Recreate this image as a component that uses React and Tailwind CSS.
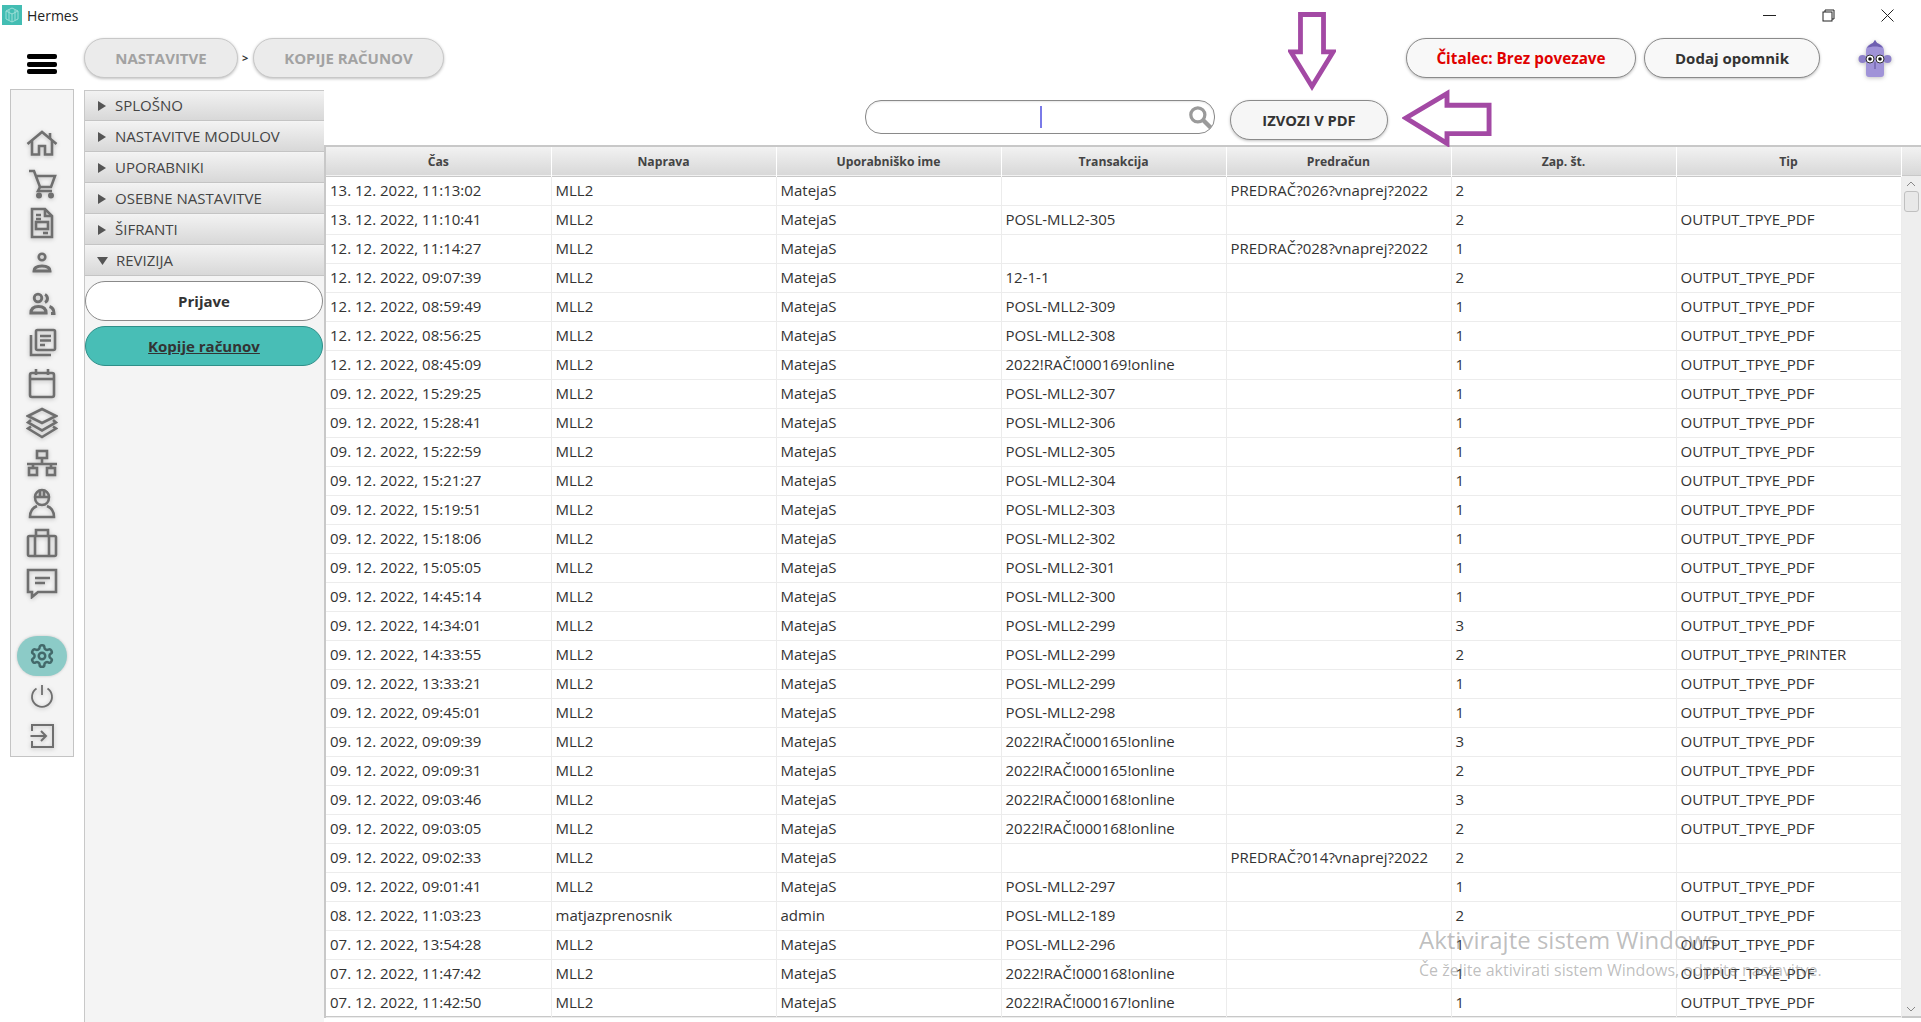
import React from "react";

const FONT = "font-['Open_Sans','Noto_Sans',sans-serif]";

const PDF = "OUTPUT_TPYE_PDF";
const rows = [
  ["13. 12. 2022, 11:13:02", "MLL2", "MatejaS", "", "PREDRAČ?026?vnaprej?2022", "2", ""],
  ["13. 12. 2022, 11:10:41", "MLL2", "MatejaS", "POSL-MLL2-305", "", "2", PDF],
  ["12. 12. 2022, 11:14:27", "MLL2", "MatejaS", "", "PREDRAČ?028?vnaprej?2022", "1", ""],
  ["12. 12. 2022, 09:07:39", "MLL2", "MatejaS", "12-1-1", "", "2", PDF],
  ["12. 12. 2022, 08:59:49", "MLL2", "MatejaS", "POSL-MLL2-309", "", "1", PDF],
  ["12. 12. 2022, 08:56:25", "MLL2", "MatejaS", "POSL-MLL2-308", "", "1", PDF],
  ["12. 12. 2022, 08:45:09", "MLL2", "MatejaS", "2022!RAČ!000169!online", "", "1", PDF],
  ["09. 12. 2022, 15:29:25", "MLL2", "MatejaS", "POSL-MLL2-307", "", "1", PDF],
  ["09. 12. 2022, 15:28:41", "MLL2", "MatejaS", "POSL-MLL2-306", "", "1", PDF],
  ["09. 12. 2022, 15:22:59", "MLL2", "MatejaS", "POSL-MLL2-305", "", "1", PDF],
  ["09. 12. 2022, 15:21:27", "MLL2", "MatejaS", "POSL-MLL2-304", "", "1", PDF],
  ["09. 12. 2022, 15:19:51", "MLL2", "MatejaS", "POSL-MLL2-303", "", "1", PDF],
  ["09. 12. 2022, 15:18:06", "MLL2", "MatejaS", "POSL-MLL2-302", "", "1", PDF],
  ["09. 12. 2022, 15:05:05", "MLL2", "MatejaS", "POSL-MLL2-301", "", "1", PDF],
  ["09. 12. 2022, 14:45:14", "MLL2", "MatejaS", "POSL-MLL2-300", "", "1", PDF],
  ["09. 12. 2022, 14:34:01", "MLL2", "MatejaS", "POSL-MLL2-299", "", "3", PDF],
  ["09. 12. 2022, 14:33:55", "MLL2", "MatejaS", "POSL-MLL2-299", "", "2", "OUTPUT_TPYE_PRINTER"],
  ["09. 12. 2022, 13:33:21", "MLL2", "MatejaS", "POSL-MLL2-299", "", "1", PDF],
  ["09. 12. 2022, 09:45:01", "MLL2", "MatejaS", "POSL-MLL2-298", "", "1", PDF],
  ["09. 12. 2022, 09:09:39", "MLL2", "MatejaS", "2022!RAČ!000165!online", "", "3", PDF],
  ["09. 12. 2022, 09:09:31", "MLL2", "MatejaS", "2022!RAČ!000165!online", "", "2", PDF],
  ["09. 12. 2022, 09:03:46", "MLL2", "MatejaS", "2022!RAČ!000168!online", "", "3", PDF],
  ["09. 12. 2022, 09:03:05", "MLL2", "MatejaS", "2022!RAČ!000168!online", "", "2", PDF],
  ["09. 12. 2022, 09:02:33", "MLL2", "MatejaS", "", "PREDRAČ?014?vnaprej?2022", "2", ""],
  ["09. 12. 2022, 09:01:41", "MLL2", "MatejaS", "POSL-MLL2-297", "", "1", PDF],
  ["08. 12. 2022, 11:03:23", "matjazprenosnik", "admin", "POSL-MLL2-189", "", "2", PDF],
  ["07. 12. 2022, 13:54:28", "MLL2", "MatejaS", "POSL-MLL2-296", "", "1", PDF],
  ["07. 12. 2022, 11:47:42", "MLL2", "MatejaS", "2022!RAČ!000168!online", "", "1", PDF],
  ["07. 12. 2022, 11:42:50", "MLL2", "MatejaS", "2022!RAČ!000167!online", "", "1", PDF],
];

const columns = ["Čas", "Naprava", "Uporabniško ime", "Transakcija", "Predračun", "Zap. št.", "Tip"];
const sections = ["SPLOŠNO", "NASTAVITVE MODULOV", "UPORABNIKI", "OSEBNE NASTAVITVE", "ŠIFRANTI", "REVIZIJA"];

const Icon = ({ children }) => (
  <svg
    viewBox="0 0 32 32"
    className="h-8 w-8 fill-none stroke-[#6f6f6f] drop-shadow-[0_1px_2px_rgba(0,0,0,0.22)]"
    strokeWidth="2.6"
  >
    {children}
  </svg>
);

const railTop = [
  <><path d="M1.500 17 16 5l14.500 12" /><path d="M6 14v13.500h7V19h6v8.500h7V14" /><path d="M24 6v6" /></>,
  <><path d="M3 4h5l6 16h11l4-11H10" /><path d="m14 20-2 4h14" /><circle cx="13" cy="28.500" r="1.700" fill="#6f6f6f" /><circle cx="25" cy="28.500" r="1.700" fill="#6f6f6f" /></>,
  <><path d="M6 2h13l7 7v21H6z" /><path d="M19 2v7h7" /><path d="M10 8h5M10 12h5" /><rect x="10" y="15" width="12" height="7" /><path d="M17 26h5" /></>,
  <><circle cx="16" cy="10" r="3.300" /><path d="M8 24c0-3.500 3.500-5 8-5s8 1.500 8 5z" strokeWidth="3" /></>,
  <><circle cx="12" cy="11" r="3.800" strokeWidth="2.800" /><path d="M5 26c0-4.500 3-6.500 7.500-6.500s7.500 2 7.500 6.500z" strokeWidth="3.200" /><path d="M19 7.500a4.500 4.500 0 0 1 0 8M23.500 19.500c3 1 4.500 3.500 4.500 7h-3" strokeWidth="3" /></>,
  <><rect x="10" y="3" width="19" height="20" rx="1.500" /><path d="M14 9h11M14 13.500h11M14 18h5" /><path d="M5 8v20h20" /></>,
  <><rect x="4" y="6" width="24" height="24" rx="2" /><path d="M4 12h24" /><path d="M10 2v6M22 2v6" /></>,
  <><path d="m16 2 14 7-14 7L2 9z" /><path d="m5 13-3 2.500 14 8 14-8-3-2.500" /><path d="m5 19.500-3 2 14 8.500 14-8.500-3-2" /></>,
  <><rect x="11" y="4" width="10" height="7" /><path d="M16 11v6M1 17h30M7 17v4M25 17v4" /><rect x="3" y="21" width="8" height="7" /><rect x="21" y="21" width="8" height="7" /></>,
  <><path d="M9 10a7 7 0 0 1 14 0c0 5-3 8-7 8s-7-3-7-8z" /><path d="M8 10h16M14 3v7M18 3v7" /><path d="M11 19c-5 2-7 5-7 11h24c0-6-2-9-7-11" /></>,
  <><rect x="2" y="9" width="28" height="20" rx="1.500" /><path d="M10 9V3h12v6M9 9v20M23 9v20" /></>,
  <><path d="M2 3h28v22H12l-6 5v-5H2z" /><path d="M9 11h15M9 16h10" /></>,
];

const Pill = ({ className, children }) => (
  <div className={`flex h-10 items-center justify-center rounded-[20px] border shadow-[0_1px_3px_rgba(0,0,0,0.25)] ${className}`}>
    {children}
  </div>
);

export default function App() {
  return (
    <div className={`relative h-[1022px] w-[1921px] overflow-hidden bg-white text-[#333333] ${FONT}`}>
      {/* title bar */}
      <div className="flex h-[30px] items-center">
        <div className="ml-[2px] flex h-5 w-5 items-center justify-center bg-[#43bdb3]">
          <svg viewBox="0 0 20 20" className="h-5 w-5 fill-none stroke-[#9edfd8]" strokeWidth="1">
            <path d="m10 3 6 3v8l-6 3-6-3V6z" />
            <path d="M4 6l6 3 6-3M10 9v8M7 5v10M13 5v10" />
          </svg>
        </div>
        <span className="ml-[5px] text-[14px] text-[#222222]">Hermes</span>
        <div className="ml-auto flex items-center">
          <svg viewBox="0 0 13 13" className="mr-[46px] h-[13px] w-[13px] stroke-[#222222]"><path d="M0 6.500h13" /></svg>
          <svg viewBox="0 0 13 13" className="mr-[46px] h-[13px] w-[13px] fill-none stroke-[#222222]"><path d="M3 3V1h9v9h-2" /><rect x="1" y="3" width="9" height="9" /></svg>
          <svg viewBox="0 0 13 13" className="mr-[27px] h-[13px] w-[13px] stroke-[#222222]"><path d="m.5.500 12 12M12.500.500l-12 12" /></svg>
        </div>
      </div>

      <div className="flex">
        {/* left rail */}
        <div className="w-[84px]">
          <div className="flex h-[59px] items-start pl-[27px] pt-[24px]">
            <div className="flex h-5 w-[30px] flex-col justify-between">
              <div className="h-[5px] rounded-[2px] bg-black" />
              <div className="h-[5px] rounded-[2px] bg-black" />
              <div className="h-[5px] rounded-[2px] bg-black" />
            </div>
          </div>
          <div className="ml-[10px] flex h-[668px] w-[64px] flex-col items-center border border-[#c4c4c4] bg-[#f4f4f4] pt-[33px]">
            {railTop.map((icon, i) => (
              <div key={i} className="flex h-10 w-full items-center justify-center">
                <Icon>{icon}</Icon>
              </div>
            ))}
            <div className="mt-[33px] flex h-10 w-[50px] items-center justify-center rounded-[20px] bg-[#8ccbc7] shadow-[0_0_3px_rgba(0,0,0,0.2)]">
              <svg viewBox="0 0 24 24" className="h-[26px] w-[26px] fill-none stroke-[#43696a]" strokeWidth="2.300">
                <circle cx="12" cy="12" r="3" />
                <path d="M12.220 2h-.440a2 2 0 0 0-2 2v.180a2 2 0 0 1-1 1.730l-.430.250a2 2 0 0 1-2 0l-.150-.080a2 2 0 0 0-2.730.730l-.220.380a2 2 0 0 0 .730 2.730l.150.100a2 2 0 0 1 1 1.720v.510a2 2 0 0 1-1 1.740l-.150.090a2 2 0 0 0-.730 2.730l.220.380a2 2 0 0 0 2.730.730l.150-.080a2 2 0 0 1 2 0l.430.250a2 2 0 0 1 1 1.730V20a2 2 0 0 0 2 2h.440a2 2 0 0 0 2-2v-.180a2 2 0 0 1 1-1.730l.430-.250a2 2 0 0 1 2 0l.150.080a2 2 0 0 0 2.730-.730l.220-.390a2 2 0 0 0-.730-2.730l-.150-.080a2 2 0 0 1-1-1.740v-.500a2 2 0 0 1 1-1.740l.150-.090a2 2 0 0 0 .730-2.730l-.220-.380a2 2 0 0 0-2.730-.730l-.150.080a2 2 0 0 1-2 0l-.430-.250a2 2 0 0 1-1-1.730V4a2 2 0 0 0-2-2z" />
              </svg>
            </div>
            <div className="flex h-10 w-full items-center justify-center">
              <Icon><path d="M16 5v10" strokeWidth="1.800" /><path d="M10.500 8.500a10 10 0 1 0 11 0" strokeWidth="1.800" /></Icon>
            </div>
            <div className="flex h-10 w-full items-center justify-center">
              <Icon><path d="M6 11V5h21v22H6v-6" strokeWidth="2" /><path d="M4.500 16H20M15 11l5 5-5 5" strokeWidth="2" /></Icon>
            </div>
          </div>
        </div>

        <div className="flex-1">
          {/* breadcrumb and top actions */}
          <div className="flex h-[60px] items-start pt-2">
            <Pill className="w-[154px] border-[#c8c8c8] bg-[#ebebeb] text-[15px] font-bold text-[#a2a2a2]">NASTAVITVE</Pill>
            <span className="mx-[4px] mt-[12px] w-[7px] text-[11px] font-bold">&gt;</span>
            <Pill className="w-[191px] border-[#c8c8c8] bg-[#ebebeb] text-[15px] font-bold text-[#a2a2a2]">KOPIJE RAČUNOV</Pill>
            <Pill className="ml-auto w-[230px] border-[#8a8a8a] bg-[#f8f8f8] text-[15.3px] font-bold text-[#e00000]">Čitalec: Brez povezave</Pill>
            <Pill className="ml-[8px] w-[176px] border-[#8a8a8a] bg-[#f8f8f8] text-[15px] font-bold text-[#333333]">Dodaj opomnik</Pill>
            <svg viewBox="0 0 34 40" className="ml-[38px] mr-[29px] h-10 w-[34px] drop-shadow-[0_1px_2px_rgba(0,0,0,0.25)]">
              <circle cx="4.500" cy="21" r="4" fill="#8d80c9" />
              <circle cx="29.500" cy="21" r="4" fill="#8d80c9" />
              <path d="M8 13c0-5 4-7 7-8l2-3 2 3c3 1 7 3 7 8v23a3 3 0 0 1-3 3H11a3 3 0 0 1-3-3z" fill="#a093d8" />
              <path d="M9 10c2-3 4-4 6-5l2-3 2 3c2 1 4 2 6 5-4-2-12-2-16 0z" fill="#6e5fb0" />
              <circle cx="12" cy="21" r="4" fill="#ffffff" stroke="#333333" />
              <circle cx="22" cy="21" r="4" fill="#ffffff" stroke="#333333" />
              <circle cx="12" cy="21" r="1.800" fill="#111111" />
              <circle cx="22" cy="21" r="1.800" fill="#111111" />
              <path d="M17 24v7" stroke="#5c4f9a" />
            </svg>
          </div>

          <div className="flex">
            {/* accordion */}
            <div className="h-[932px] w-[240px] border-l border-[#c8c8c8] bg-[#f4f4f4]">
              <div className="flex flex-col gap-px border-t border-[#c8c8c8]">
                {sections.map((name) => (
                  <div
                    key={name}
                    className="flex h-[30px] items-center border-b border-[#c4c4c4] bg-gradient-to-b from-[#f2f2f2] to-[#d8d8d8] pl-[12px] text-[15px] text-[#444444]"
                  >
                    {name === "REVIZIJA" ? (
                      <svg viewBox="0 0 11 8" className="mr-[8px] h-2 w-[11px] fill-[#555555]"><path d="M0 0h11L5.500 8z" /></svg>
                    ) : (
                      <svg viewBox="0 0 8 10" className="mr-[9px] ml-[1px] h-[10px] w-[8px] fill-[#555555]"><path d="M0 0l8 5-8 5z" /></svg>
                    )}
                    {name}
                  </div>
                ))}
              </div>
              <div className="mt-[5px] flex flex-col gap-[5px] pr-[1px]">
                <div className="flex h-10 items-center justify-center rounded-[20px] border border-[#8a8a8a] bg-white text-[15px] font-bold">Prijave</div>
                <div className="flex h-10 items-center justify-center rounded-[20px] border border-[#2f8f89] bg-[#48beb6] text-[15px] font-bold underline">Kopije računov</div>
              </div>
            </div>

            <div className="flex-1">
              {/* search and export */}
              <div className="flex h-[55px] items-start pl-[541px] pt-[10px]">
                <div className="flex h-[34px] w-[350px] items-center rounded-[16px] border border-[#8a8a8a] shadow-[inset_0_1px_2px_rgba(0,0,0,0.1)]">
                  <div className="ml-[174px] h-[22px] w-[2px] bg-[#7a7ae8]" />
                  <svg viewBox="0 0 24 24" className="ml-auto mr-[1px] h-[26px] w-[26px] fill-none stroke-[#9a9a9a]" strokeWidth="3">
                    <circle cx="10" cy="10" r="6.500" />
                    <path d="m15 15 7 7" strokeWidth="4" />
                  </svg>
                </div>
                <Pill className="ml-[15px] w-[158px] border-[#8a8a8a] bg-[#f6f6f6] text-[14.700px] font-bold">IZVOZI V PDF</Pill>
              </div>

              {/* table */}
              <div className="flex h-[873px] border-t-2 border-b-2 border-l-[2px] border-[#c8c8c8]">
                <table className="w-[1575px] table-fixed border-collapse self-start text-[15px] text-[#333333]">
                  <thead>
                    <tr className="h-[29px] border-b border-[#c8c8c8] bg-gradient-to-b from-[#f2f2f2] to-[#d8d8d8]">
                      {columns.map((col) => (
                        <th key={col} className="w-[225px] border-r border-white pt-px text-center text-[12.200px] font-bold text-[#444444]">{col}</th>
                      ))}
                    </tr>
                  </thead>
                  <tbody>
                    {rows.map((row, i) => (
                      <tr key={i} className="h-[29px] border-b border-[#ececec]">
                        {row.map((cell, j) => (
                          <td key={j} className="border-r border-[#ececec] pl-1 whitespace-nowrap">{cell}</td>
                        ))}
                      </tr>
                    ))}
                  </tbody>
                </table>
                <div className="flex w-[19px] flex-col bg-[#eeeeee]">
                  <div className="h-[29px] border-b border-[#c8c8c8] bg-gradient-to-b from-[#f2f2f2] to-[#d8d8d8]" />
                  <div className="flex h-[15px] items-center justify-center">
                    <svg viewBox="0 0 10 6" className="h-[6px] w-[10px] fill-none stroke-[#888888]"><path d="m1 5 4-4 4 4" /></svg>
                  </div>
                  <div className="mx-[2px] h-[21px] rounded-[3px] border border-[#c0c0c0] bg-[#e8e8e8]" />
                  <div className="mt-auto flex h-[15px] items-center justify-center">
                    <svg viewBox="0 0 10 6" className="h-[6px] w-[10px] fill-none stroke-[#888888]"><path d="m1 1 4 4 4-4" /></svg>
                  </div>
                </div>
              </div>
            </div>
          </div>
        </div>
      </div>

      {/* arrows drawn over the screenshot */}
      <svg viewBox="0 0 50 82" className="pointer-events-none absolute left-[1288px] top-[10px] h-[82px] w-[48px] fill-white stroke-[#a349a4]" strokeWidth="5">
        <path d="M13 3h24v39h10L25 78 3 42h10z" />
      </svg>
      <svg viewBox="0 0 92 58" className="pointer-events-none absolute left-[1402px] top-[89px] h-[58px] w-[90px] fill-white stroke-[#a349a4]" strokeWidth="5">
        <path d="M46 4v12h43v29H46v10L4 29z" />
      </svg>

      {/* activation watermark */}
      <div className="pointer-events-none absolute left-[1419px] top-[923px] text-[rgba(110,110,110,0.45)]">
        <div className="text-[24px] leading-[34px]">Aktivirajte sistem Windows</div>
        <div className="mt-[3px] text-[16px] leading-[20px]">Če želite aktivirati sistem Windows, odprite nastavitve.</div>
      </div>
    </div>
  );
}
